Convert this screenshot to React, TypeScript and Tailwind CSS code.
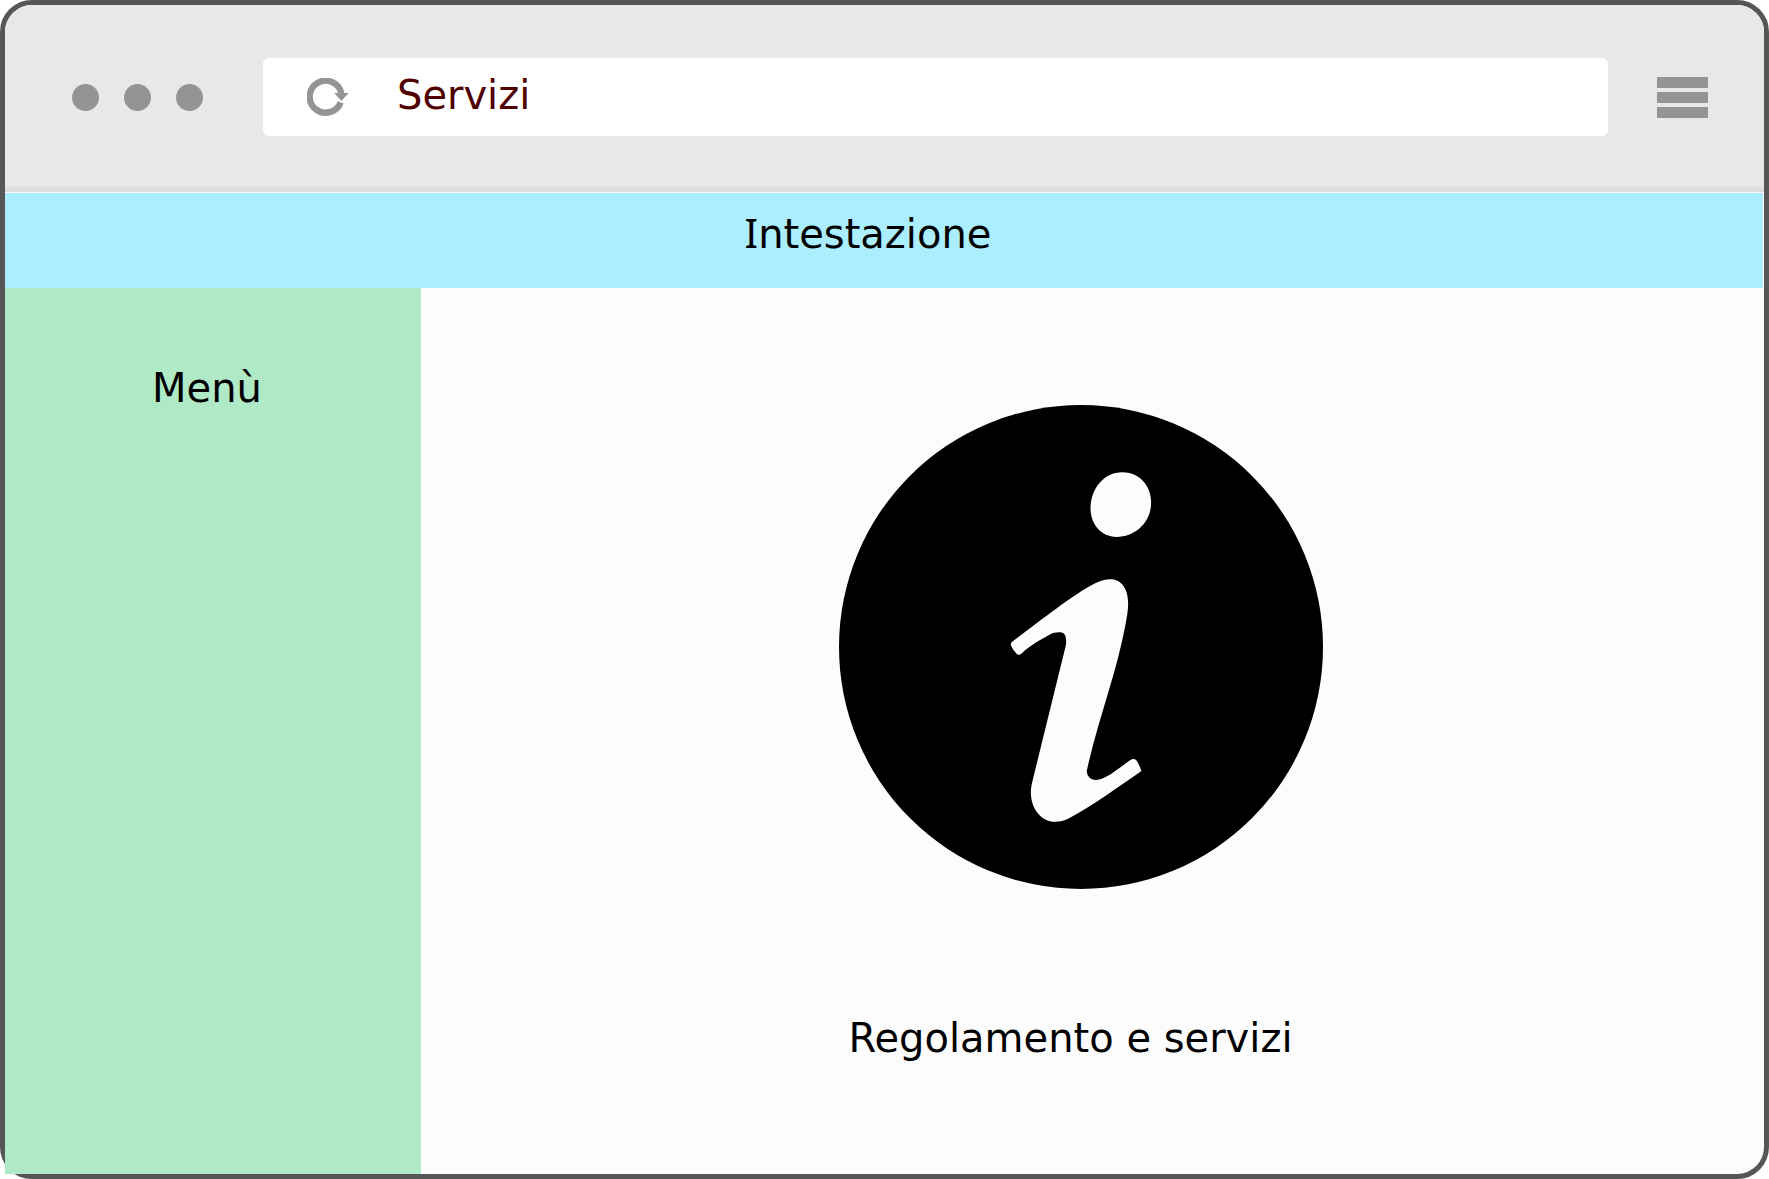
function ReloadIcon() {
  return (
    <svg viewBox="0 0 126 117" className="h-[39px] w-[42px]" aria-hidden="true">
      <path d="M101 73A48 48 0 1 1 103 46" fill="none" stroke="#949494" strokeWidth="19" />
      <path d="M82 45H125L103 69Z" fill="#949494" />
    </svg>
  );
}

function InfoIcon() {
  return (
    <svg viewBox="55 44 1453 1453" className="w-[484px] max-w-full" role="img" aria-label="Informazioni">
      <circle cx="781.5" cy="770.5" r="726.5" fill="#000002" />
      <path
        fill="#fcfcfc"
        d="M905 246C956 246 992 285 992 338C992 395 945 440 888 440C842 440 810 402 810 354C810 294 852 246 905 246Z"
      />
      <path
        fill="#fcfcfc"
        d="M573 756C650 699 755 614 824 579C841 571 855 567 870 567C904 567 923 597 923 639C923 661 919 681 915 704C886 858 835 980 799 1141C798 1157 810 1170 826 1170C856 1170 897 1132 931 1109C937 1105 944 1106 948 1111C955 1121 959 1132 963 1143C888 1194 819 1247 743 1286C731 1292 718 1295 704 1295C661 1295 631 1254 631 1207C631 1198 632 1190 634 1180L735 770C738 756 738 742 732 732C726 723 702 725 688 733C661 748 629 765 603 790C598 795 591 795 587 789C579 780 570 768 571 761C571 759 572 757 573 756Z"
      />
    </svg>
  );
}

export default function App() {
  return (
    <div className="flex min-h-screen flex-col rounded-[32px] border-[5px] border-[#565656] bg-[#fcfcfc] font-['DejaVu_Sans',sans-serif] text-[40px] leading-[48px] text-black">
      <div className="flex h-[187px] items-center rounded-t-[27px] border-b-[5px] border-[#dedede] bg-[#e8e8e8] pt-0.5 pr-14 pl-[67px]">
        <div className="flex shrink-0 gap-[25px]">
          <span className="size-[27px] rounded-full bg-[#949494]" />
          <span className="size-[27px] rounded-full bg-[#949494]" />
          <span className="size-[27px] rounded-full bg-[#949494]" />
        </div>
        <div className="ml-[60px] flex h-[78px] min-w-0 flex-1 items-center rounded-md bg-white pl-11">
          <button type="button" aria-label="Ricarica" className="shrink-0">
            <ReloadIcon />
          </button>
          <input
            type="text"
            aria-label="Indirizzo"
            defaultValue="Servizi"
            className="ml-12 h-[52px] min-w-0 flex-1 bg-transparent pb-1 text-[#500000] outline-none"
          />
        </div>
        <button type="button" aria-label="Apri menù" className="ml-[49px] flex shrink-0 flex-col gap-1">
          <span className="h-[11px] w-[51px] bg-[#949494]" />
          <span className="h-[11px] w-[51px] bg-[#949494]" />
          <span className="h-[11px] w-[51px] bg-[#949494]" />
        </button>
      </div>
      <header className="mt-px mr-px h-[95px] bg-[#aaeeff] pt-4 pr-8 text-center">
        <h1>
          <span className="font-['Noto_Sans',sans-serif]">I</span>ntestazione
        </h1>
      </header>
      <div className="flex flex-1">
        <aside className="w-[416px] shrink-0 bg-[#afe9c6] pt-[76px] pr-3 text-center">
          <h2>Menù</h2>
        </aside>
        <main className="flex min-w-0 flex-1 flex-col items-center pt-[117px] pr-6">
          <InfoIcon />
          <p className="mt-[125px] pr-5">Regolamento e servizi</p>
        </main>
      </div>
    </div>
  );
}
